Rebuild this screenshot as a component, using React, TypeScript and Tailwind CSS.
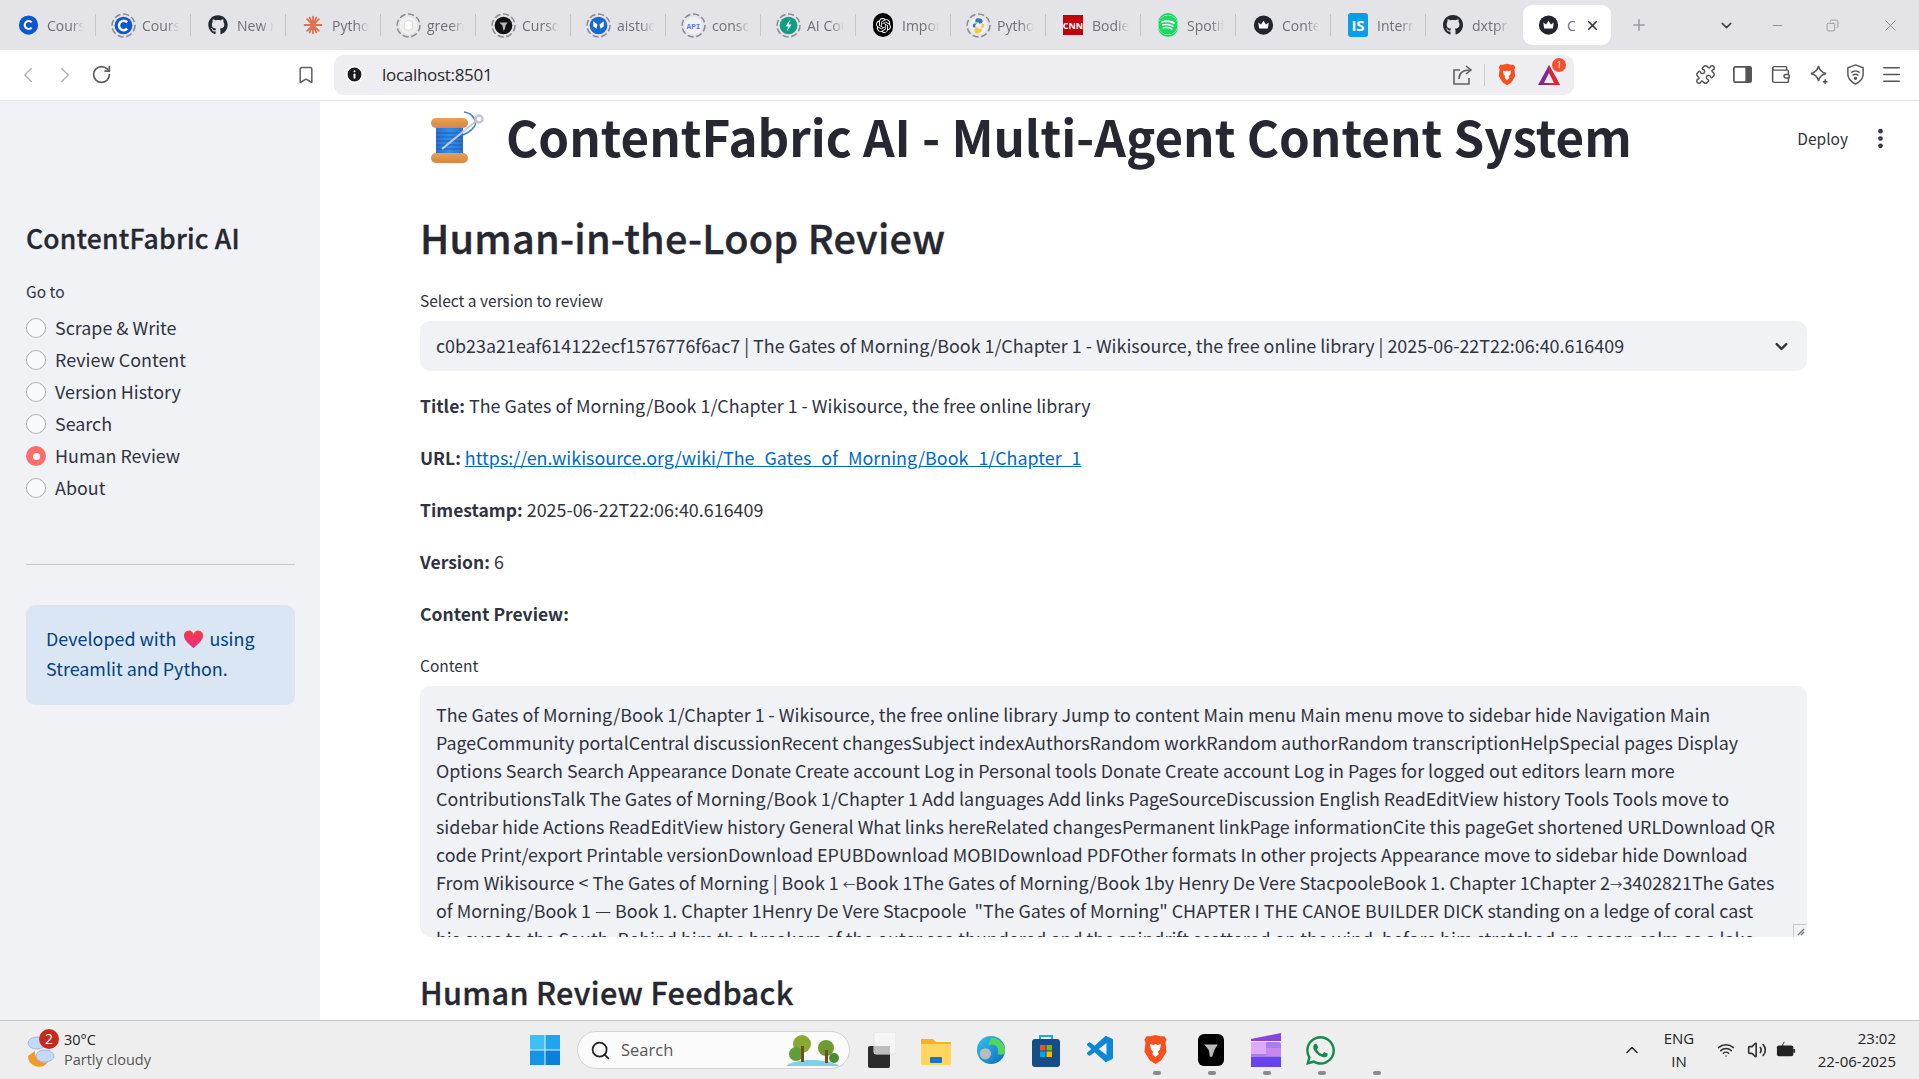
import React from "react";
import { FaGithub, FaSpotify, FaWhatsapp } from "react-icons/fa";
import { SiOpenai } from "react-icons/si";
import { VscVscode } from "react-icons/vsc";
import { ChevronDown, ChevronLeft, ChevronRight, ChevronUp, EllipsisVertical, Info, Menu, Minus, Plus, RotateCw, Search, Volume2, Wifi, X, Bookmark, Puzzle, Wallet, Copy } from "lucide-react";

const Circle = ({ bg, children, dashed }: { bg: string; children?: React.ReactNode; dashed?: boolean }) => (
  <svg viewBox="0 0 24 24" className={dashed ? "w-[25px] h-[25px] shrink-0" : "w-[21px] h-[24px] shrink-0"}>
    {dashed && <circle cx="12" cy="12" r="11" fill="none" stroke="#8a8a90" strokeWidth="1.5" strokeDasharray="6 2.5" />}
    <circle cx="12" cy="12" r={dashed ? 8.5 : 11} fill={bg} />
    {children}
  </svg>
);
const CLetter = <path d="M15.5 9a4.5 4.5 0 1 0 0 6" fill="none" stroke="#fff" strokeWidth="2.4" />;
const Crown = <path d="M7 16h10l1-7-3.2 2.5L12 7l-2.8 4.5L6 9z" fill="#fff" />;

const Brave = ({ size = 24 }: { size?: number }) => (
  <svg viewBox="0 0 24 28" width={size} height={size * 1.15}>
    <path d="M12 1l5 1 3 0 2 3-1 3 1 8-5 8-5 3-5-3-5-8 1-8-1-3 2-3 3 0z" fill="#f4511e" />
    <path d="M7 9l3 1 2-1 2 1 3-1-1 5-2 2 1 2-3 3-3-3 1-2-2-2z" fill="#fff" />
  </svg>
);

const tabIcons: React.ReactNode[] = [
  <Circle bg="#0b57d0">{CLetter}</Circle>,
  <Circle bg="#0b57d0" dashed>{CLetter}</Circle>,
  <FaGithub className="w-[20px] h-[20px] text-[#24292f]" />,
  <svg viewBox="0 0 24 24" className="w-[20px] h-[20px]"><g stroke="#e0714e" strokeWidth="2.2" strokeLinecap="round"><path d="M12 2v20M2 12h20M5 5l14 14M19 5L5 19M8 3l8 18M16 3L8 21" /></g></svg>,
  <Circle bg="#f1f1ef" dashed><path d="M8 9l4-2 4 2v6l-4 2-4-2z" fill="#fff" stroke="#ddd" /></Circle>,
  <Circle bg="#111" dashed><path d="M8 9h8l-2 3-1 4-1 1-1-5z" fill="#bbb" /></Circle>,
  <Circle bg="#1769d2" dashed><path d="M7 8l4 3-1 4-3-2zM17 8l-4 3 1 4 3-2z" fill="#fff" /></Circle>,
  <Circle bg="#eef1f8" dashed><text x="12" y="15" textAnchor="middle" fontSize="7.5" fontFamily="Liberation Mono" fontWeight="700" fill="#5b7be0">API</text></Circle>,
  <Circle bg="#0f9d84" dashed><path d="M14 6l-5 7h3l-2 5 5-7h-3z" fill="#fff" /></Circle>,
  <div className="w-[20px] h-[24px] rounded-full bg-black flex items-center justify-center"><SiOpenai className="w-[15px] h-[15px] text-white" /></div>,
  <Circle bg="#eef1f8" dashed><path d="M12 5c-3 0-3 1.500-3 3v1h3.500v1H8c-2 0-2 4 0 4h1v-2c0-1 1-2 2-2h3c1 0 2-1 2-2V8c0-1.500-1-3-4-3z" fill="#3c78aa" /><path d="M12 19c3 0 3-1.500 3-3v-1h-3.500v-1H16c2 0 2-4 0-4h-1v2c0 1-1 2-2 2h-3c-1 0-2 1-2 2v1c0 1.500 1 3 4 3z" fill="#f5c83c" /></Circle>,
  <div className="w-[20px] h-[20px] bg-[#c4000c] flex items-center justify-center text-white text-[9px] font-bold leading-none">CNN</div>,
  <div className="w-[20px] h-[24px] rounded-full bg-[#1ed760] flex items-center justify-center"><FaSpotify className="w-[20px] h-[20px] text-[#1ed760] bg-white rounded-full" /></div>,
  <Circle bg="#24242e">{Crown}</Circle>,
  <div className="w-[20px] h-[24px] rounded-[3px] bg-[#0a9ee8] flex items-center justify-center text-white text-[15px] font-bold leading-none">IS</div>,
  <FaGithub className="w-[20px] h-[22px] text-[#24292f]" />,
  <Circle bg="#24242e">{Crown}</Circle>,
];
const titles = ["Courses", "Courses", "New repo", "Python", "green", "Cursor", "aistudio", "console", "AI Course", "Import", "Python", "Bodies", "Spotify", "Content", "Internet", "dxtpro", "ContentFabric"];

const Ar = ({ c }: { c: string }) => <span className="text-[12.4px]">{c}</span>;

const lines: React.ReactNode[] = [
  "The Gates of Morning/Book 1/Chapter 1 - Wikisource, the free online library Jump to content Main menu Main menu move to sidebar hide Navigation Main",
  "PageCommunity portalCentral discussionRecent changesSubject indexAuthorsRandom workRandom authorRandom transcriptionHelpSpecial pages Display",
  "Options Search Search Appearance Donate Create account Log in Personal tools Donate Create account Log in Pages for logged out editors learn more",
  "ContributionsTalk The Gates of Morning/Book 1/Chapter 1 Add languages Add links PageSourceDiscussion English ReadEditView history Tools Tools move to",
  "sidebar hide Actions ReadEditView history General What links hereRelated changesPermanent linkPage informationCite this pageGet shortened URLDownload QR",
  "code Print/export Printable versionDownload EPUBDownload MOBIDownload PDFOther formats In other projects Appearance move to sidebar hide Download",
  <>From Wikisource {"<"} The Gates of Morning | Book 1 <Ar c="←" />Book 1The Gates of Morning/Book 1by Henry De Vere StacpooleBook 1. Chapter 1Chapter 2<Ar c="→" />3402821The Gates</>,
  "of Morning/Book 1 — Book 1. Chapter 1Henry De Vere Stacpoole  \"The Gates of Morning\" CHAPTER I THE CANOE BUILDER DICK standing on a ledge of coral cast",
  "his eyes to the South. Behind him the breakers of the outer sea thundered and the spindrift scattered on the wind, before him stretched an ocean calm as a lake",
];

const nav = ["Scrape & Write", "Review Content", "Version History", "Search", "Human Review", "About"];

const Spool = () => (
  <svg viewBox="0 0 56 56" className="w-[56px] h-[56px]">
    <defs>
      <linearGradient id="fl" x1="0" y1="0" x2="0" y2="1"><stop offset="0" stopColor="#e8a24c" /><stop offset="1" stopColor="#d9824a" /></linearGradient>
      <linearGradient id="bd" x1="0" y1="0" x2="1" y2="0"><stop offset="0" stopColor="#2a6fd0" /><stop offset="0.5" stopColor="#2f90ee" /><stop offset="1" stopColor="#2a6fd0" /></linearGradient>
    </defs>
    <path d="M35 2c9 1 14 10 10 15-3 4-8 7-14 9" fill="none" stroke="#3b82e0" strokeWidth="1.600" />
    <rect x="7" y="17" width="27" height="27" fill="url(#bd)" />
    <g stroke="#1d5fb8" strokeWidth="1"><path d="M7 23h27M7 27h27M7 31h27M7 35h27M7 39h27" /></g>
    <rect x="2" y="8" width="37" height="10" rx="5" fill="url(#fl)" />
    <rect x="2" y="43" width="37" height="10" rx="5" fill="url(#fl)" />
    <path d="M13 39L47 11" stroke="#c9ccd8" strokeWidth="2" />
    <circle cx="50" cy="9" r="3.500" fill="#fff" stroke="#c5c5d2" strokeWidth="2.500" />
  </svg>
);

const Heart = () => (
  <svg viewBox="0 0 24 22" className="inline-block w-[21px] h-[19px] ml-[7px] mr-[5px] align-[-3px]">
    <defs><linearGradient id="h" x1="0" y1="0" x2="0" y2="1"><stop offset="0" stopColor="#f43a3a" /><stop offset="1" stopColor="#ea2a90" /></linearGradient></defs>
    <path d="M12 21C5 15 1 11 1 7a5.500 5.500 0 0 1 11-1.500A5.500 5.500 0 0 1 23 7c0 4-4 8-11 14z" fill="url(#h)" />
  </svg>
);

const TaskSlot = ({ children }: { children: React.ReactNode }) => (
  <div className="w-[55px] h-[40px] shrink-0 flex items-center justify-center">{children}</div>
);

export default function App() {
  return (
    <div className="h-screen w-full overflow-hidden flex flex-col bg-white font-['Noto_Sans_CJK_SC','Liberation_Sans',sans-serif] text-[#31333f]">
      {/* Tab strip */}
      <div className="h-[50px] shrink-0 bg-[#e3e3e8] flex items-start pl-[1px] pt-[5px] font-['Open_Sans',sans-serif]">
        {titles.map((t, i) => {
          const active = i === titles.length - 1;
          return (
            <div key={i} className={active ? "w-[88px] ml-[2px] mr-[4px] h-[40px] bg-white rounded-[9px] flex items-center pl-[15px] relative" : "w-[95px] h-[40px] flex items-center pl-[17px] relative"}>
              <div className="w-[20px] flex justify-center shrink-0">{tabIcons[i]}</div>
              <div className={active ? "ml-[9px] w-[8px] overflow-hidden whitespace-nowrap text-[14px] text-[#6f6f75]" : "ml-[9px] w-[37px] overflow-hidden whitespace-nowrap text-[14px] text-[#6f6f75] [mask-image:linear-gradient(to_right,black_65%,transparent)]"}>{t}</div>
              {active && <X className="w-[15px] h-[15px] ml-[10px] text-[#333]" strokeWidth={2.5} />}
              {!active && i < titles.length - 2 && <div className="absolute right-0 top-[9px] h-[22px] w-px bg-[#c6c6cc]" />}
            </div>
          );
        })}
        <Plus className="w-[18px] h-[18px] ml-[15px] mt-[11px] text-[#9a9aa0]" />
        <ChevronDown className="w-[17px] h-[17px] ml-[70px] mt-[12px] text-[#444]" strokeWidth={2.2} />
        <Minus className="w-[15px] h-[15px] ml-[35px] mt-[13px] text-[#888]" strokeWidth={1.4} />
        <Copy className="w-[13px] h-[13px] ml-[41px] mt-[14px] text-[#888] -scale-x-100" strokeWidth={1.4} />
        <X className="w-[19px] h-[19px] ml-[42px] mt-[11px] text-[#888]" strokeWidth={1.2} />
      </div>

      {/* Toolbar */}
      <div className="h-[51px] shrink-0 bg-white border-b border-[#e3e3e8] flex items-center pb-[1px] font-['Open_Sans',sans-serif]">
        <ChevronLeft className="w-[26px] h-[26px] ml-[15px] text-[#b4b4b8]" strokeWidth={1.4} />
        <ChevronRight className="w-[26px] h-[26px] ml-[11px] text-[#b4b4b8]" strokeWidth={1.4} />
        <RotateCw className="w-[21px] h-[21px] ml-[13px] text-[#5f5f64]" strokeWidth={2} />
        <Bookmark className="w-[20px] h-[22px] ml-[184px] text-[#5f5f64]" strokeWidth={1.8} />
        <div className="ml-[18px] w-[1240px] h-[40px] rounded-[10px] bg-[#ededf2] flex items-center relative">
          <Info className="w-[19px] h-[19px] ml-[11px] text-white fill-[#1b1b1f]" strokeWidth={2.5} />
          <span className="ml-[18px] text-[17px] text-[#2a2a2e] tracking-[-0.3px]">localhost:8501</span>
          <svg viewBox="0 0 22 22" className="w-[22px] h-[22px] ml-auto" fill="none" stroke="#5f5f64" strokeWidth="1.600">
            <path d="M8 6H2v14h15v-6" /><path d="M7 15c0-6 4-9 11-9" /><path d="M14 2l5 4-5 4" />
          </svg>
          <div className="w-px h-[22px] bg-[#c9c9cf] ml-[10px]" />
          <div className="ml-[12px] flex"><Brave size={20} /></div>
          <div className="ml-[20px] mr-[13px] relative w-[24px] h-[24px]">
            <svg viewBox="0 0 24 24" className="w-[24px] h-[24px]"><path d="M12 2l11 20H1z" fill="#7b2d8e" /><path d="M12 2l11 20H12z" fill="#e0262c" /><path d="M12 10l5 10H7z" fill="#ededf2" /></svg>
            <div className="absolute -top-[5px] -right-[5px] w-[14px] h-[14px] rounded-full bg-[#f5502a] text-white text-[9px] flex items-center justify-center leading-none">1</div>
          </div>
        </div>
        <Puzzle className="w-[21px] h-[21px] ml-[121px] text-[#555]" strokeWidth={1.7} />
        <svg viewBox="0 0 22 22" className="w-[21px] h-[21px] ml-[16px]"><rect x="2" y="3" width="18" height="16" rx="1.500" fill="none" stroke="#555" strokeWidth="1.800" /><rect x="14" y="3" width="6" height="16" fill="#555" /></svg>
        <Wallet className="w-[21px] h-[21px] ml-[17px] text-[#555]" strokeWidth={1.7} />
        <svg viewBox="0 0 22 22" className="w-[21px] h-[21px] ml-[17px]" fill="none" stroke="#555" strokeWidth="1.600"><path d="M11 2c1 5 3 7 8 8-5 1-7 3-8 8-1-5-3-7-8-8 5-1 7-3 8-8z" /><path d="M18 16v5M15.500 18.500h5" /></svg>
        <svg viewBox="0 0 22 24" className="w-[21px] h-[23px] ml-[16px]" fill="none" stroke="#555" strokeWidth="1.500"><path d="M11 2l8 3v7c0 5-4 8-8 10-4-2-8-5-8-10V5z" /><path d="M6.500 10a7 7 0 0 1 9 0M8 13a4.500 4.500 0 0 1 6 0" /><circle cx="11" cy="16" r="1" fill="#555" /></svg>
        <Menu className="w-[23px] h-[23px] ml-[14px] text-[#555]" strokeWidth={1.7} />
      </div>

      {/* App */}
      <div className="flex-1 min-h-0 flex overflow-hidden">
        <aside className="w-[320px] shrink-0 bg-[#f0f2f6] pl-[26px] pr-[25px] pt-[117px]">
          <h2 className="text-[26.500px] leading-[40px] font-medium tracking-[0.2px] [-webkit-text-stroke:0.3px_#262730] text-[#262730]">ContentFabric AI</h2>
          <div className="mt-[22px] text-[15.500px] leading-[22px]">Go to</div>
          <div className="mt-[10px]">
            {nav.map((n) => (
              <div key={n} className="h-[32px] flex items-center gap-[9px] text-[17.900px]">
                {n === "Human Review" ? (
                  <span className="w-[20px] h-[20px] rounded-full bg-[#ff6c6c] flex items-center justify-center"><span className="w-[7px] h-[7px] rounded-full bg-white" /></span>
                ) : (
                  <span className="w-[20px] h-[20px] rounded-full border-[1.5px] border-[#b5b6bd] bg-[#f8f9fb]" />
                )}
                <span className="-mt-[2px]">{n}</span>
              </div>
            ))}
          </div>
          <div className="mt-[60px] h-px bg-[#c8c9cf]" />
          <div className="mt-[40px] h-[100px] rounded-[9px] bg-[#dbe6f4] text-[#004280] pl-[20px] pr-[20px] pt-[18px] text-[17.900px] leading-[30px]">
            Developed with<Heart />using<br />Streamlit and Python.
          </div>
        </aside>

        <main className="flex-1 min-w-0 relative pl-[100px] pr-[112px]">
          <div className="absolute top-[26px] right-[71px] flex items-center text-[15.500px] leading-[22px]">Deploy</div>
          <EllipsisVertical className="absolute top-[25px] right-[26px] w-[25px] h-[25px] text-[#31333f]" strokeWidth={2.5} />
          <div className="h-[72px] flex items-center">
            <div className="ml-[9px] mt-[1px]"><Spool /></div>
            <h1 className="ml-[21px] -mt-[2px] text-[49.300px] font-bold leading-[60px] whitespace-nowrap text-[#262730]">ContentFabric AI - Multi-Agent Content System</h1>
          </div>
          <h2 className="mt-[34px] text-[39.600px] leading-[60px] font-medium tracking-[0.25px] [-webkit-text-stroke:0.4px_#262730] text-[#262730]">Human-in-the-Loop Review</h2>
          <div className="mt-[22px] text-[15.500px] leading-[22px]">Select a version to review</div>
          <div className="mt-[10px] h-[50px] rounded-[10px] bg-[#f0f2f6] flex items-center justify-between pl-[16px] pr-[16px] text-[17.900px] whitespace-nowrap">
            <span className="-mt-[2px]">c0b23a21eaf614122ecf1576776f6ac7 | The Gates of Morning/Book 1/Chapter 1 - Wikisource, the free online library | 2025-06-22T22:06:40.616409</span>
            <ChevronDown className="w-[19px] h-[19px]" strokeWidth={3} />
          </div>
          <div className="mt-[20px] text-[17.900px] leading-[28px] whitespace-nowrap">
            <p className="h-[28px]"><b className="font-bold text-[17.500px]">Title:</b> The Gates of Morning/Book 1/Chapter 1 - Wikisource, the free online library</p>
            <p className="h-[28px] mt-[24px]"><b className="font-bold text-[17.500px]">URL:</b> <a className="text-[#0068c9] underline">https://en.wikisource.org/wiki/The_Gates_of_Morning/Book_1/Chapter_1</a></p>
            <p className="h-[28px] mt-[24px]"><b className="font-bold text-[17.500px]">Timestamp:</b> 2025-06-22T22:06:40.616409</p>
            <p className="h-[28px] mt-[24px]"><b className="font-bold text-[17.500px]">Version:</b> 6</p>
            <p className="h-[28px] mt-[24px]"><b className="font-bold text-[17.500px]">Content Preview:</b></p>
          </div>
          <div className="mt-[27px] text-[15.500px] leading-[22px]">Content</div>
          <div className="mt-[10px] h-[251px] rounded-[10px] bg-[#f0f2f6] overflow-hidden px-[16px] pt-[14px] text-[17.900px] leading-[28px] relative">
            {lines.map((l, i) => (
              <div key={i} className="h-[28px] whitespace-pre">{l}</div>
            ))}
            <div className="absolute right-[1px] bottom-0 w-[13px] h-[13px] bg-[#f0f2f6] border-l border-t border-[#c9c9cf] flex items-end justify-end">
              <svg viewBox="0 0 10 10" className="w-[10px] h-[10px]"><path d="M2 8l6-6M5 8l3-3" stroke="#777" strokeWidth="1.400" /></svg>
            </div>
          </div>
          <h3 className="mt-[33px] text-[30.600px] leading-[44px] font-medium tracking-[0.33px] [-webkit-text-stroke:0.35px_#262730] whitespace-nowrap text-[#262730]">Human Review Feedback</h3>
        </main>
      </div>

      {/* Windows taskbar */}
      <div className="h-[59px] shrink-0 bg-[#eeeeee] border-t border-[#c5c5c5] flex items-center font-['Open_Sans',sans-serif] relative">
        <div className="ml-[25px] relative w-[32px] h-[40px]">
          <svg viewBox="0 0 32 40" className="w-[32px] h-[40px]">
            <ellipse cx="12" cy="13" rx="9" ry="6" fill="#c5d8f5" stroke="#9db9e6" />
            <path d="M3 26a11 11 0 0 0 20 6 10 10 0 0 1-13-11z" fill="#f59a23" />
            <ellipse cx="20" cy="26" rx="9" ry="6" fill="#c5d8f5" stroke="#9db9e6" />
          </svg>
          <div className="absolute top-[-1px] left-[14px] w-[20px] h-[20px] rounded-full bg-[#c42b1c] text-white text-[14px] flex items-center justify-center leading-none">2</div>
        </div>
        <div className="ml-[7px] text-[14.500px] leading-[20px] w-[100px] text-[#222] whitespace-nowrap">
          <div>30°C</div>
          <div className="text-[#555]">Partly cloudy</div>
        </div>
        <svg viewBox="0 0 30 30" className="w-[30px] h-[30px] ml-[366px]">
          <rect x="0" y="0" width="14.500" height="14.500" fill="#3cc0f5" />
          <rect x="15.500" y="0" width="14.500" height="14.500" fill="#1ea5ee" />
          <rect x="0" y="15.500" width="14.500" height="14.500" fill="#1495e8" />
          <rect x="15.500" y="15.500" width="14.500" height="14.500" fill="#0a80dd" />
        </svg>
        <div className="ml-[17px] mr-[3px] w-[273px] h-[38px] rounded-full bg-[#fafafa] border border-[#d4d4d4] flex items-center relative">
          <Search className="w-[21px] h-[21px] ml-[12px] text-[#222]" strokeWidth={2} />
          <span className="ml-[10px] text-[16.500px] text-[#555]">Search</span>
          <svg viewBox="0 0 58 36" className="absolute right-[7px] top-0 w-[58px] h-[36px]">
            <path d="M2 34c10-8 40-8 54 0z" fill="#7fd0e6" />
            <circle cx="18" cy="12" r="9" fill="#8aa832" /><circle cx="12" cy="22" r="7" fill="#5f9e3a" />
            <rect x="17" y="14" width="3" height="16" fill="#7a4a22" />
            <circle cx="42" cy="16" r="8" fill="#6f9a30" /><rect x="41" y="18" width="3" height="13" fill="#7a4a22" />
            <circle cx="50" cy="26" r="5" fill="#4c8a35" />
          </svg>
        </div>
        <TaskSlot>
          <svg viewBox="0 0 30 36" className="w-[30px] h-[36px]">
            <rect x="2" y="14" width="22" height="22" rx="2" fill="#2b2b2b" />
            <rect x="8" y="0" width="22" height="22" rx="2" fill="#f5f5f5" stroke="#e2e2e2" />
            <rect x="8" y="14" width="16" height="8" fill="#bdbdbd" />
          </svg>
        </TaskSlot>
        <TaskSlot>
          <svg viewBox="0 0 30 30" className="w-[30px] h-[30px]">
            <path d="M0 4h12l3 3h15v23H0z" fill="#f0b429" />
            <path d="M0 9h30v21H0z" fill="#ffd75e" />
            <rect x="9" y="22" width="12" height="6" rx="1" fill="#1a73c7" />
          </svg>
        </TaskSlot>
        <TaskSlot>
          <svg viewBox="0 0 32 32" className="w-[30px] h-[30px]">
            <defs><linearGradient id="e" x1="0" y1="0" x2="1" y2="1"><stop offset="0" stopColor="#35c1f1" /><stop offset="1" stopColor="#0b6fbf" /></linearGradient></defs>
            <circle cx="16" cy="16" r="15" fill="url(#e)" />
            <path d="M16 3c8 0 15 6 15 14 0 4-5 5-8 3 3-7-4-12-10-9z" fill="#54d65a" />
            <circle cx="10" cy="20" r="6" fill="#bbb" />
          </svg>
        </TaskSlot>
        <TaskSlot>
          <svg viewBox="0 0 30 34" className="w-[30px] h-[34px]">
            <path d="M9 8V3h12v5" fill="none" stroke="#25a8e8" strokeWidth="2" />
            <rect x="1" y="6" width="28" height="28" rx="3" fill="#164d84" />
            <rect x="9" y="12" width="5.500" height="5.500" fill="#f25022" /><rect x="15.500" y="12" width="5.500" height="5.500" fill="#7fba00" />
            <rect x="9" y="18.500" width="5.500" height="5.500" fill="#00a4ef" /><rect x="15.500" y="18.500" width="5.500" height="5.500" fill="#ffb900" />
          </svg>
        </TaskSlot>
        <TaskSlot><VscVscode className="w-[32px] h-[32px] text-[#0a87d8]" /></TaskSlot>
        <TaskSlot><Brave size={27} /></TaskSlot>
        <TaskSlot>
          <div className="w-[26px] h-[32px] rounded-[6px] bg-black flex items-center justify-center">
            <svg viewBox="0 0 16 16" className="w-[18px] h-[18px]"><path d="M2 3h12l-3 5-2 6-2 0-1-6z" fill="#bbb" /></svg>
          </div>
        </TaskSlot>
        <TaskSlot>
          <svg viewBox="0 0 30 34" className="w-[30px] h-[34px]">
            <path d="M0 6L30 0v8H0z" fill="#8746d8" />
            <rect y="9" width="30" height="25" rx="2" fill="#a97cf0" />
            <rect y="9" width="15" height="12" fill="#e2a8f8" /><rect x="15" y="15" width="15" height="8" fill="#c788f0" />
            <rect y="24" width="30" height="10" fill="#6644ee" />
          </svg>
        </TaskSlot>
        <TaskSlot><FaWhatsapp className="w-[33px] h-[33px] text-[#128c4e]" /></TaskSlot>
        <div className="absolute left-[1153px] bottom-[4px] flex gap-[47px]">
          {[0, 1, 2, 3, 4].map((i) => <span key={i} className="w-[8px] h-[4px] rounded-[2px] bg-[#8a8a8a]" />)}
        </div>
        <ChevronUp className="w-[20px] h-[20px] ml-[274px] text-[#222]" strokeWidth={1.8} />
        <div className="ml-[13px] w-[48px] text-center text-[15px] leading-[23px] text-[#222]">ENG<br />IN</div>
        <Wifi className="w-[18px] h-[18px] ml-[14px] text-[#333]" />
        <Volume2 className="w-[20px] h-[20px] ml-[12px] text-[#333]" />
        <svg viewBox="0 0 22 20" className="w-[20px] h-[20px] ml-[9px]"><rect x="1" y="5" width="18" height="12" rx="2" fill="#222" /><rect x="19" y="9" width="2" height="4" fill="#222" /><path d="M9 1l-3 6h3l-2 5" stroke="#222" fill="none" /></svg>
        <div className="ml-auto mr-[23px] text-right text-[15px] leading-[23px] text-[#222]">23:02<br />22-06-2025</div>
      </div>
    </div>
  );
}
